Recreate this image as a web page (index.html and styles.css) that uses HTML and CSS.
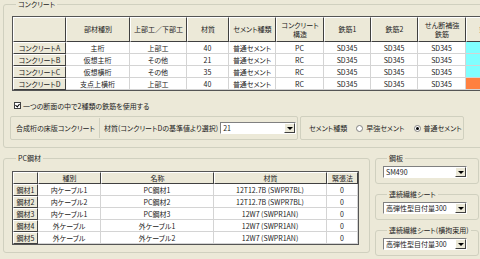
FILE: index.html
```html
<!DOCTYPE html>
<html lang="ja">
<head>
  <meta charset="UTF-8" />
  <title>断面設定</title>
  <link rel="stylesheet" href="styles.css">
</head>
<body>
  <div class="window">
    <!-- コンクリート -->
    <div class="group concrete">
      <div class="group-title">コンクリート</div>
      <table class="grid concrete-grid">
        <thead>
          <tr>
            <th class="w53"></th>
            <th class="w64">部材種別</th>
            <th class="w57">上部工／下部工</th>
            <th class="w42">材質</th>
            <th class="w47">セメント種類</th>
            <th class="w48">コンクリート<br>構造</th>
            <th class="w47">鉄筋1</th>
            <th class="w47">鉄筋2</th>
            <th class="w48">せん断補強<br>鉄筋</th>
            <th class="w48">鉄筋色</th>
          </tr>
        </thead>
        <tbody>
          <tr><th>コンクリートA</th><td>主桁</td><td>上部工</td><td>40</td><td>普通セメント</td><td>PC</td><td>SD345</td><td>SD345</td><td>SD345</td><td class="cyan"></td></tr>
          <tr><th>コンクリートB</th><td>仮想主桁</td><td>その他</td><td>21</td><td>普通セメント</td><td>RC</td><td>SD345</td><td>SD345</td><td>SD345</td><td class="cyan"></td></tr>
          <tr><th>コンクリートC</th><td>仮想横桁</td><td>その他</td><td>35</td><td>普通セメント</td><td>RC</td><td>SD345</td><td>SD345</td><td>SD345</td><td class="cyan"></td></tr>
          <tr><th>コンクリートD</th><td>支点上横桁</td><td>上部工</td><td>40</td><td>普通セメント</td><td>RC</td><td>SD345</td><td>SD345</td><td>SD345</td><td class="orange"></td></tr>
        </tbody>
      </table>

      <label class="check-row"><span class="check checked"></span>一つの断面の中で2種類の鉄筋を使用する</label>

      <div class="slab-row">
        <div class="box slab-box">
          <span class="box-label">合成桁の床版コンクリート</span>
          <span class="sep"></span>
          <span class="box-label">材質(コンクリートDの基準値より選択)</span>
          <div class="combo combo-slab">
            <span class="combo-value">21</span>
            <span class="combo-btn"><span class="arrow"></span></span>
          </div>
        </div>
        <div class="box cement-box">
          <span class="box-label">セメント種類</span>
          <span class="radio"></span><span class="box-label">早強セメント</span>
          <span class="radio selected"></span><span class="box-label">普通セメント</span>
        </div>
      </div>
    </div>

    <div class="lower">
      <!-- PC鋼材 -->
      <div class="group pc">
        <div class="group-title">PC鋼材</div>
        <table class="grid pc-grid">
          <thead>
            <tr>
              <th class="w25"></th>
              <th class="w63">種別</th>
              <th class="w113">名称</th>
              <th class="w113">材質</th>
              <th class="w31">緊張法</th>
            </tr>
          </thead>
          <tbody>
            <tr><th>鋼材1</th><td>内ケーブル1</td><td>PC鋼材1</td><td>12T12.7B (SWPR7BL)</td><td>0</td></tr>
            <tr><th>鋼材2</th><td>内ケーブル2</td><td>PC鋼材2</td><td>12T12.7B (SWPR7BL)</td><td>0</td></tr>
            <tr><th>鋼材3</th><td>内ケーブル1</td><td>PC鋼材3</td><td>12W7 (SWPR1AN)</td><td>0</td></tr>
            <tr><th>鋼材4</th><td>外ケーブル</td><td>外ケーブル1</td><td>12W7 (SWPR1AN)</td><td>0</td></tr>
            <tr><th>鋼材5</th><td>外ケーブル</td><td>外ケーブル2</td><td>12W7 (SWPR1AN)</td><td>0</td></tr>
          </tbody>
        </table>
      </div>

      <div class="side">
        <div class="group side-group">
          <div class="group-title">鋼板</div>
          <div class="combo combo-side">
            <span class="combo-value">SM490</span>
            <span class="combo-btn"><span class="arrow"></span></span>
          </div>
        </div>
        <div class="group side-group">
          <div class="group-title">連続繊維シート</div>
          <div class="combo combo-side">
            <span class="combo-value">高弾性型目付量300</span>
            <span class="combo-btn"><span class="arrow"></span></span>
          </div>
        </div>
        <div class="group side-group">
          <div class="group-title">連続繊維シート(横拘束用)</div>
          <div class="combo combo-side">
            <span class="combo-value">高弾性型目付量300</span>
            <span class="combo-btn"><span class="arrow"></span></span>
          </div>
        </div>
      </div>
    </div>
  </div>
</body>
</html>
```

FILE: styles.css
```css
* {
  box-sizing: border-box;
}

body {
  margin: 0;
  background: #ece9d8;
  font-family: "Noto Sans CJK JP", "Liberation Sans", sans-serif;
  font-size: 7px;
  font-feature-settings: "palt";
  color: #222;
  overflow: hidden;
}

.window {
  width: 480px;
  height: 259px;
  overflow: hidden;
}

/* group boxes */
.group {
  border: 1px solid #d0d0bf;
  border-radius: 3px;
}

.group-title {
  display: table;
  height: 9px;
  line-height: 9px;
  margin: -5px 0 0 4px;
  padding: 0 2px;
  background: #ece9d8;
  white-space: nowrap;
}

.concrete {
  width: 540px;
  height: 144px;
  margin: 4px 0 0 3px;
  padding: 0 0 0 8px;
}

/* grids */
.grid {
  border-collapse: separate;
  border-spacing: 0;
  table-layout: fixed;
  border: 1px solid #555;
  background: #fff;
}

.grid th,
.grid td {
  padding: 0;
  line-height: 8px;
  text-align: center;
  vertical-align: middle;
  white-space: nowrap;
  overflow: hidden;
  font-weight: normal;
}

.grid thead th {
  line-height: 9px;
}

.grid th {
  background: #ece9d8;
  border-top: 1px solid #fff;
  border-left: 1px solid #fff;
  border-right: 1px solid #404040;
  border-bottom: 1px solid #404040;
}

.grid td {
  border-right: 1px solid #d4d4d4;
  border-bottom: 1px solid #d4d4d4;
}

.grid tbody tr {
  height: 12px;
}

.concrete-grid {
  width: 503px;
  margin-top: 7px;
}

.concrete-grid thead tr {
  height: 25px;
}

.w25 { width: 25px; }
.w31 { width: 31px; }
.w42 { width: 42px; }
.w47 { width: 47px; }
.w48 { width: 48px; }
.w53 { width: 53px; }
.w57 { width: 57px; }
.w63 { width: 63px; }
.w64 { width: 64px; }
.w113 { width: 113px; }

.cyan {
  background: #80ffff;
}

.orange {
  background: #ff8040;
}

/* checkbox */
.check-row {
  display: flex;
  align-items: center;
  height: 9px;
  margin: 10px 0 0 2px;
}

.check {
  flex-shrink: 0;
  width: 7px;
  height: 7px;
  margin-right: 2px;
  border: 1px solid #404040;
  background: #fff;
  position: relative;
}

.check.checked::after {
  content: "";
  position: absolute;
  left: 1px;
  top: 0;
  width: 2px;
  height: 3px;
  border-right: 1px solid #000;
  border-bottom: 1px solid #000;
  transform: rotate(40deg);
}

/* slab row */
.slab-row {
  display: flex;
  gap: 2px;
  margin: 6px 0 0 -2px;
}

.box {
  display: flex;
  align-items: center;
  height: 24px;
  border: 1px solid #d0d0bf;
  border-radius: 2px;
}

.box-label {
  white-space: nowrap;
}

.slab-box {
  width: 288px;
  padding-left: 5px;
}

.sep {
  flex-shrink: 0;
  width: 1px;
  height: 20px;
  margin: 0 4px;
  background: #d0d0bf;
}

.cement-box {
  width: 164px;
  padding-left: 8px;
}

.radio {
  flex-shrink: 0;
  width: 7px;
  height: 7px;
  border-radius: 50%;
  border: 1px solid #808080;
  background: #fff;
  margin: 0 3px 0 9px;
  position: relative;
}

.radio.selected::after {
  content: "";
  position: absolute;
  left: 1px;
  top: 1px;
  width: 3px;
  height: 3px;
  border-radius: 50%;
  background: #000;
}

/* combobox */
.combo {
  display: flex;
  flex-shrink: 0;
  height: 12px;
  border: 1px solid;
  border-color: #808080 #fff #fff #808080;
  background: #fff;
}

.combo-value {
  flex: 1;
  padding-left: 2px;
  line-height: 10px;
  white-space: nowrap;
}

.combo-btn {
  flex-shrink: 0;
  width: 11px;
  display: flex;
  align-items: center;
  justify-content: center;
  background: #ece9d8;
  border: 1px solid;
  border-color: #fff #404040 #404040 #fff;
}

.arrow {
  width: 0;
  height: 0;
  border-left: 3px solid transparent;
  border-right: 3px solid transparent;
  border-top: 3px solid #000;
}

.combo-slab {
  width: 76px;
  margin-left: 2px;
}

/* lower area */
.lower {
  display: flex;
  gap: 5px;
  margin: 10px 0 0 3px;
}

.pc {
  width: 367px;
  height: 95px;
  padding-left: 8px;
}

.pc-grid {
  width: 347px;
  margin-top: 8px;
}

.pc-grid thead tr {
  height: 12px;
}

.side {
  display: flex;
  flex-direction: column;
  gap: 10px;
}

.side-group {
  width: 104px;
  height: 26px;
  padding-left: 7px;
}

.combo-side {
  width: 84px;
  margin-top: 3px;
}
```
